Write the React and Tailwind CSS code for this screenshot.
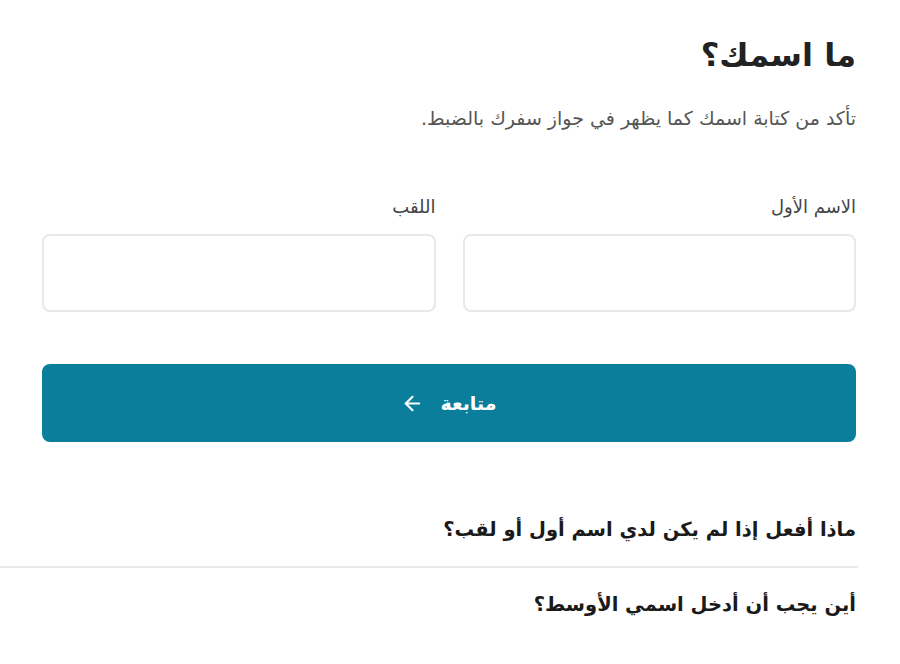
import React from "react";
import { ArrowLeft } from "lucide-react";

const App = () => {
  return (
    <div
      dir="rtl"
      className="min-h-[664px] bg-white text-[#1a1a1a]"
      style={{ fontFamily: '"DejaVu Sans", "Noto Sans", sans-serif' }}
    >
      <div className="pr-[44px] pl-[42px] pt-[31px]">
        {/* Heading */}
        <h1 className="text-[32px] font-bold leading-[48px] text-[#222]">ما اسمك؟</h1>
        <p className="mt-[26px] text-[19px] leading-[26px] text-[#555]">
          تأكد من كتابة اسمك كما يظهر في جواز سفرك بالضبط.
        </p>

        {/* Inputs */}
        <div className="mt-[64px] grid grid-cols-2 gap-[27px]">
          <label className="flex flex-col">
            <span className="text-[18px] leading-[24px] text-[#444]">الاسم الأول</span>
            <input className="mt-[15px] h-[78px] rounded-[8px] border-2 border-[#e6e8ea] bg-white px-4 text-[16px] outline-none" />
          </label>
          <label className="flex flex-col">
            <span className="text-[18px] leading-[24px] text-[#444]">اللقب</span>
            <input className="mt-[15px] h-[78px] rounded-[8px] border-2 border-[#e6e8ea] bg-white px-4 text-[16px] outline-none" />
          </label>
        </div>

        {/* Continue */}
        <button className="mt-[52px] flex h-[78px] w-full items-center justify-center gap-[16px] rounded-[8px] bg-[#0b7e9c] text-[19px] font-bold text-white">
          متابعة
          <ArrowLeft className="h-[23px] w-[23px]" strokeWidth={2.2} />
        </button>
      </div>

      {/* FAQ */}
      <div className="mt-[73px] mr-[42px]">
        <div className="border-b-2 border-[#e8eaeb] pb-[21px] pr-[2px] text-[19.5px] font-bold leading-[30px] text-[#1a1a1a]">
          ماذا أفعل إذا لم يكن لدي اسم أول أو لقب؟
        </div>
        <div className="pt-[22px] pr-[2px] text-[19.5px] font-bold leading-[30px] text-[#1a1a1a]">
          أين يجب أن أدخل اسمي الأوسط؟
        </div>
      </div>
    </div>
  );
};

export default App;
